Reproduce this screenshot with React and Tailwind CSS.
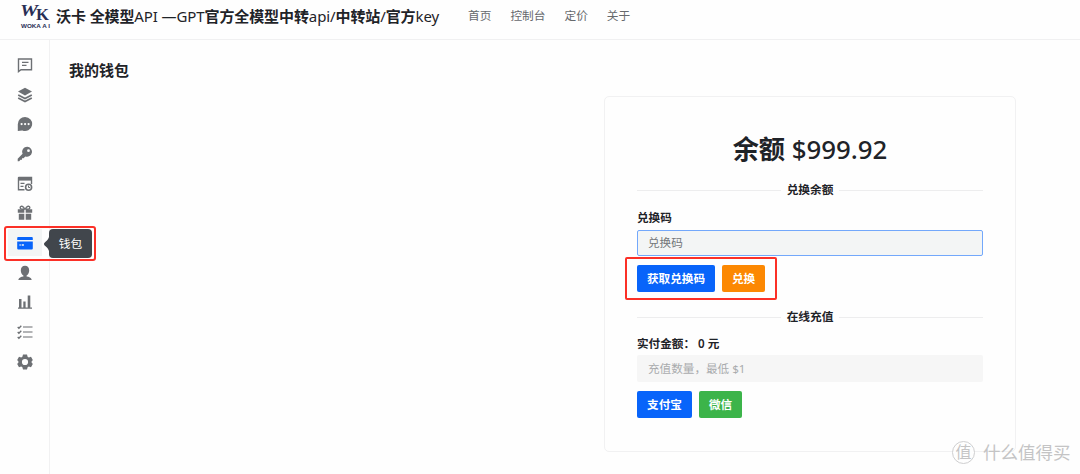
import React from "react";

const CJK = /([\u3000-\u9fff\uff00-\uffef]+)/;

// Chinese runs are set bold, Latin runs stay lighter.
function Mixed({ text, latin = "" }) {
  return text.split(CJK).map((part, i) =>
    CJK.test(part) ? (
      <span key={i} className="font-bold">{part}</span>
    ) : (
      <span key={i} className={latin}>{part}</span>
    )
  );
}

const S = ({ children }) => (
  <svg width="16" height="16" viewBox="0 0 16 16" fill="currentColor" stroke="none">
    {children}
  </svg>
);

const icons = [
  <S>
    <path d="M1.5 2h13v10.7H4L1.5 14.6z" fill="none" stroke="currentColor" strokeWidth="1.4" />
    <path d="M5 5.4h6.5M5 8.4h4.5" fill="none" stroke="currentColor" strokeWidth="1.2" />
  </S>,
  <S>
    <path d="M8 .8 15 4.6 8 8.4 1 4.6z" />
    <path d="M1.2 8 8 11.5 14.8 8M1.2 11 8 14.5 14.8 11" fill="none" stroke="currentColor" strokeWidth="1.7" />
  </S>,
  <S>
    <path fillRule="evenodd" d="M8.1 1a7 7 0 1 1-2.8 13.4L.8 15V8.2A7.2 7.2 0 0 1 8.1 1zM4.6 7a1.1 1.1 0 1 0 0 2.2 1.1 1.1 0 0 0 0-2.2zm3.5 0a1.1 1.1 0 1 0 0 2.2 1.1 1.1 0 0 0 0-2.2zm3.5 0a1.1 1.1 0 1 0 0 2.2 1.1 1.1 0 0 0 0-2.2z" />
  </S>,
  <S>
    <path fillRule="evenodd" d="M10.3.7a5 5 0 1 1-2 9.7L6.5 12.2H5v1.5H3.5L2.2 15.3H.7v-2.5l4.9-5A5 5 0 0 1 10.3.7zm1.2 2.6a1.4 1.4 0 1 0 0 2.8 1.4 1.4 0 0 0 0-2.8z" />
  </S>,
  <S>
    <path d="M1.5 1.5h13V8M7.5 13.8h-6V1.5" fill="none" stroke="currentColor" strokeWidth="1.4" />
    <path d="M1 1h14v3.6H1z" />
    <path d="M3.5 7.3h4M3.5 10.4h3" stroke="currentColor" strokeWidth="1.2" />
    <circle cx="11.6" cy="11.3" r="3" fill="none" stroke="currentColor" strokeWidth="1.6" />
    <path d="M11.5 9.5v2h1.6" fill="none" stroke="currentColor" />
  </S>,
  <S>
    <path d="M.8 4.3h6.5v3.4H.8zM8.7 4.3h6.5v3.4H8.7zM1.8 8.7h5.5v6H1.8zM8.7 8.7h5.5v6H8.7z" />
    <path d="M7.7 4.3C6.5.6 3.2.4 3.2 2.7c0 1 .9 1.6 4.5 1.6M8.3 4.3c1.2-3.7 4.5-3.9 4.5-1.6 0 1-.9 1.6-4.5 1.6" fill="none" stroke="currentColor" strokeWidth="1.4" />
  </S>,
  <S>
    <path d="M1.2 2h13.6q1 0 1 1v2H.2V3q0-1 1-1z" />
    <path fillRule="evenodd" d="M.2 6.4h15.6v7q0 1-1 1H1.2q-1 0-1-1zM2.5 9.3v1.4h1.2V9.3zm2.2 0v1.4h2.2V9.3z" />
  </S>,
  <S>
    <path d="M8 .8c2.6 0 4.2 2 4.2 4.6 0 2.2-1.1 4.3-2.6 5v1.2c2.5.3 4.5 1.1 5 2.8v.5H1.4v-.5c.5-1.7 2.5-2.5 5-2.8v-1.2c-1.5-.7-2.6-2.8-2.6-5C3.8 2.8 5.4.8 8 .8z" />
  </S>,
  <S>
    <path d="M2 5h2.5v8.5H2zM6.3 7.5h2.3v6H6.3zM10.7 1.5h2.6v12h-2.6zM1 13.5h14v1.3H1z" />
  </S>,
  <S>
    <path d="M6 3h9.5M6 8h9.5M6 13h9.5" stroke="currentColor" strokeOpacity="0.7" strokeWidth="1.5" />
    <path d="m.7 3 1.2 1.2L4.3 1.7M.7 8l1.2 1.2L4.3 6.7M.7 13l1.2 1.2 2.4-2.5" fill="none" stroke="currentColor" strokeWidth="1.3" />
  </S>,
  <S>
    <path fillRule="evenodd" d="M6 .6h4l.6 2.1 1.2.7 2.2-.6 1.8 3.3L14.3 8l1.5 1.9-1.8 3.3-2.2-.6-1.2.7-.6 2.1H6l-.6-2.1-1.2-.7-2.2.6L.2 9.9 1.7 8 .2 6.1 2 2.8l2.2.6 1.2-.7zM8 4.9a3.1 3.1 0 1 0 0 6.2 3.1 3.1 0 0 0 0-6.2z" />
  </S>,
];

function Logo() {
  return (
    <svg width="32" height="30" viewBox="0 0 32 30" fill="#292e55" overflow="visible">
      <text x="0" y="16" fontSize="17.5" fontWeight="700" fontStyle="italic" fontFamily="Liberation Serif, serif" textLength="18" lengthAdjust="spacingAndGlyphs">W</text>
      <text x="16" y="19.5" fontSize="17" fontWeight="700" fontFamily="Liberation Serif, serif" textLength="13" lengthAdjust="spacingAndGlyphs">K</text>
      <text x="1" y="28" fontSize="5.5" fontWeight="700" fontFamily="Liberation Sans, sans-serif" textLength="29" lengthAdjust="spacingAndGlyphs">WOKA A I</text>
    </svg>
  );
}

function Divider({ children }) {
  return (
    <div className="flex h-5 items-center gap-[6px] text-[11.7px] font-bold">
      <div className="h-px flex-1 bg-[#ededee]" />
      <span className="whitespace-nowrap">{children}</span>
      <div className="h-px flex-1 bg-[#ededee]" />
    </div>
  );
}

function Button({ className, children }) {
  return (
    <button className={"flex h-[27px] items-center justify-center rounded-[2px] text-[11.6px] font-bold whitespace-nowrap text-white " + className}>
      {children}
    </button>
  );
}

export default function App() {
  return (
    <div className="relative flex h-[474px] w-[1080px] flex-col overflow-hidden bg-[#fefefe] font-['Noto_Sans','Noto_Sans_CJK_SC',sans-serif] text-[#1f2328]">
      <header className="flex h-10 shrink-0 items-start border-b border-[#f0f0f1] pl-5">
        <Logo />
        <h1 className="ml-1 flex h-[33px] w-[384px] items-center text-[15px] tracking-[-0.1px] whitespace-pre">
          <span><Mixed text="沃卡 全模型API —GPT官方全模型中转api/中转站/官方key" /></span>
        </h1>
        <nav className="ml-[28px] flex h-8 items-center gap-[19px] text-[11.7px] text-[#66696d]">
          <a>首页</a>
          <a>控制台</a>
          <a>定价</a>
          <a>关于</a>
        </nav>
      </header>

      <div className="flex flex-1">
        <aside className="flex w-[50px] shrink-0 flex-col items-center border-r border-[#f1f1f2] pt-[10px] text-[#6d7074]">
          {icons.map((icon, i) =>
            i === 6 ? (
              <div key={i} className="relative flex h-[29.7px] w-[49px] items-center justify-center text-[#0864fa]">
                <div className="flex h-[27px] w-[34px] items-center justify-center bg-[#f3f5f5]">{icon}</div>
                <div className="absolute top-[1px] left-[44px] z-10 flex h-[29px] items-center">
                  <svg width="5" height="14" viewBox="0 0 5 14" fill="#41464c"><path d="M5 0v14C4 10 0 9 0 7s4-3 5-7z" /></svg>
                  <div className="flex h-[29px] w-[43px] items-center justify-center rounded-[4px] bg-[#41464c] text-[11.7px] text-white">钱包</div>
                </div>
                <div className="absolute top-[-2px] left-[4px] z-20 h-[35px] w-[92px] rounded-[3px] border-[2.5px] border-[#fb3027]" />
              </div>
            ) : (
              <div key={i} className="flex h-[29.7px] items-center justify-center">{icon}</div>
            )
          )}
        </aside>

        <main className="flex flex-1 items-start">
          <h2 className="w-[554px] pt-[20px] pl-[19px] text-[15px] leading-[21px] font-bold">我的钱包</h2>
          <section className="mt-[56px] flex h-[356px] w-[412px] flex-col rounded-[5px] border border-[#f1f1f2] px-[32px]">
            <div className="mt-[34px] flex h-[38px] items-center justify-center text-[26.2px] whitespace-pre">
              <span><Mixed text="余额 $999.92" latin="text-[25.8px] font-medium" /></span>
            </div>
            <div className="mt-[11px]"><Divider>兑换余额</Divider></div>
            <label className="mt-[10px] flex h-[16px] items-center text-[11.6px] font-bold">兑换码</label>
            <div className="mt-[4px] flex h-[26px] items-center rounded-[2px] border border-[#73a8fb] bg-[#f3f5f5] pl-[10px] text-[11.6px] text-[#74777a]">兑换码</div>
            <div className="relative mt-[9px] flex gap-[7px]">
              <Button className="w-[78px] bg-[#0864fa]">获取兑换码</Button>
              <Button className="w-[43px] bg-[#fc8802]">兑换</Button>
              <div className="absolute top-[-8px] left-[-12px] h-[43px] w-[152px] rounded-[2px] border-[2.5px] border-[#fb3027]" />
            </div>
            <div className="mt-[15px]"><Divider>在线充值</Divider></div>
            <label className="mt-[8px] flex h-[17px] items-center text-[11.6px] font-bold whitespace-pre">
              实付金额：<span className="ml-[3px] font-semibold">0 元</span>
            </label>
            <div className="mt-[3px] flex h-[27px] items-center rounded-[2px] bg-[#f6f6f6] pl-[11px] text-[11.6px] text-[#a9abad]">充值数量，最低 $1</div>
            <div className="mt-[9px] flex gap-[7px]">
              <Button className="w-[55px] bg-[#0864fa]">支付宝</Button>
              <Button className="w-[43px] bg-[#3cb44a]">微信</Button>
            </div>
          </section>
        </main>
      </div>

      <div className="absolute top-[440px] left-[952px] flex items-center gap-[8px] text-[#c4c4c5]">
        <div className="flex h-[23px] w-[23px] items-center justify-center rounded-full border border-[#cfcfd0] bg-[#fefefe] text-[16px]">值</div>
        <span className="text-[17.5px] leading-[24px] whitespace-nowrap">什么值得买</span>
      </div>
    </div>
  );
}
